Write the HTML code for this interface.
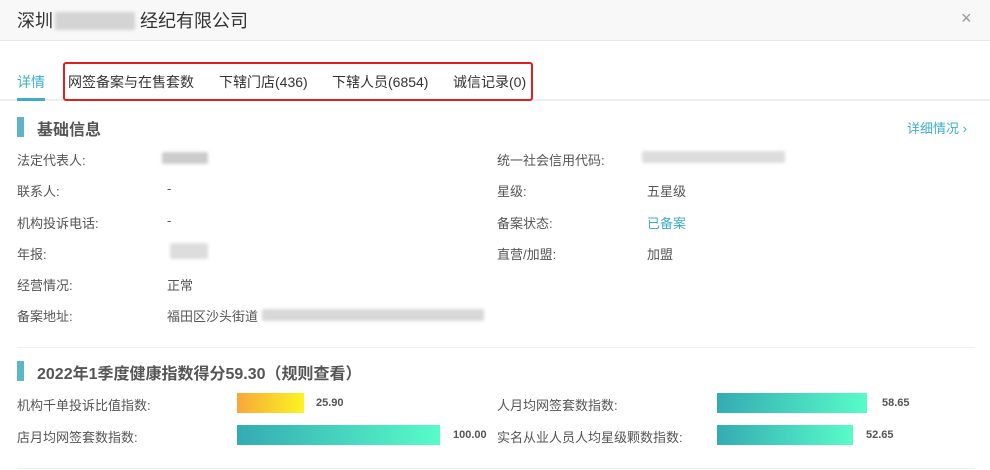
<!DOCTYPE html>
<html><head><meta charset="utf-8"><style>
*{margin:0;padding:0;box-sizing:border-box}
body{width:990px;height:470px;background:#fff;font-family:"Liberation Sans","Noto Sans CJK SC",sans-serif;color:#555;font-size:13px;position:relative;overflow:hidden}
.a{position:absolute;white-space:nowrap}
.blur{position:absolute;background:#ccc;filter:blur(1.5px);border-radius:2px}
.bar{position:absolute;height:20px;background:linear-gradient(90deg,#34abb3,#58fcc8)}
.v{position:absolute;font-size:11px;font-weight:bold;color:#555}
.t{font-size:14px;color:#333;top:72px}
</style></head><body>
<div class="a" style="left:0;top:0;width:990px;height:41px;background:#f8f8f8;border-bottom:1px solid #e8e8e8"></div>
<div class="a" style="left:17px;top:7px;font-size:18px;color:#333">深圳</div>
<div class="blur" style="left:55px;top:12px;width:80px;height:18px;background:#d4d4d4"></div>
<div class="a" style="left:140px;top:7px;font-size:18px;color:#333">经纪有限公司</div>
<div class="a" style="left:961px;top:8px;font-size:18px;color:#999">×</div>

<div class="a" style="left:0;top:99px;width:990px;height:2px;background:#eee"></div>
<div class="a t" style="left:17px;color:#3eaec7">详情</div>
<div class="a" style="left:17px;top:98px;width:28px;height:3px;background:#3eaec7"></div>
<div class="a" style="left:63px;top:62px;width:470px;height:39px;border:2px solid #e02020;border-radius:3px"></div>
<div class="a t" style="left:68px">网签备案与在售套数</div>
<div class="a t" style="left:219px">下辖门店(436)</div>
<div class="a t" style="left:332px">下辖人员(6854)</div>
<div class="a t" style="left:453px">诚信记录(0)</div>

<div class="a" style="left:17px;top:117px;width:7px;height:20px;background:#5cb5c9"></div>
<div class="a" style="left:37px;top:116px;font-size:16px;font-weight:bold;color:#555">基础信息</div>
<div class="a" style="left:907px;top:118px;color:#3eaec7">详细情况 ›</div>

<div class="a" style="left:17px;top:150px">法定代表人:</div><div class="blur" style="left:162px;top:152px;width:46px;height:12px"></div>
<div class="a" style="left:17px;top:181px">联系人:</div><div class="a" style="left:167px;top:181px">-</div>
<div class="a" style="left:17px;top:213px">机构投诉电话:</div><div class="a" style="left:167px;top:213px">-</div>
<div class="a" style="left:17px;top:244px">年报:</div><div class="blur" style="left:170px;top:243px;width:38px;height:16px;background:#ddd"></div>
<div class="a" style="left:17px;top:275px">经营情况:</div><div class="a" style="left:167px;top:275px">正常</div>
<div class="a" style="left:17px;top:306px">备案地址:</div><div class="a" style="left:167px;top:306px">福田区沙头街道</div>
<div class="blur" style="left:262px;top:309px;width:222px;height:12px;background:#d8d8d8"></div>

<div class="a" style="left:497px;top:150px">统一社会信用代码:</div><div class="blur" style="left:642px;top:151px;width:143px;height:12px;background:#ddd"></div>
<div class="a" style="left:497px;top:181px">星级:</div><div class="a" style="left:647px;top:181px">五星级</div>
<div class="a" style="left:497px;top:213px">备案状态:</div><div class="a" style="left:647px;top:213px;color:#3eaec7">已备案</div>
<div class="a" style="left:497px;top:244px">直营/加盟:</div><div class="a" style="left:647px;top:244px">加盟</div>

<div class="a" style="left:17px;top:347px;width:958px;height:1px;background:#eee"></div>
<div class="a" style="left:17px;top:361px;width:7px;height:20px;background:#5cb5c9"></div>
<div class="a" style="left:37px;top:360px;font-size:16px;font-weight:bold;color:#555">2022年1季度健康指数得分59.30（规则查看）</div>

<div class="a" style="left:17px;top:395px">机构千单投诉比值指数:</div>
<div class="bar" style="left:237px;top:393px;width:67px;background:linear-gradient(90deg,#f7a73a,#fbf520)"></div><div class="v" style="left:316px;top:397px">25.90</div>
<div class="a" style="left:17px;top:427px">店月均网签套数指数:</div>
<div class="bar" style="left:237px;top:425px;width:203px"></div><div class="v" style="left:453px;top:429px">100.00</div>
<div class="a" style="left:497px;top:395px">人月均网签套数指数:</div>
<div class="bar" style="left:717px;top:393px;width:150px"></div><div class="v" style="left:882px;top:397px">58.65</div>
<div class="a" style="left:497px;top:427px">实名从业人员人均星级颗数指数:</div>
<div class="bar" style="left:717px;top:425px;width:136px"></div><div class="v" style="left:866px;top:429px">52.65</div>
<div class="a" style="left:17px;top:468px;width:958px;height:1px;background:#eee"></div>
</body></html>
